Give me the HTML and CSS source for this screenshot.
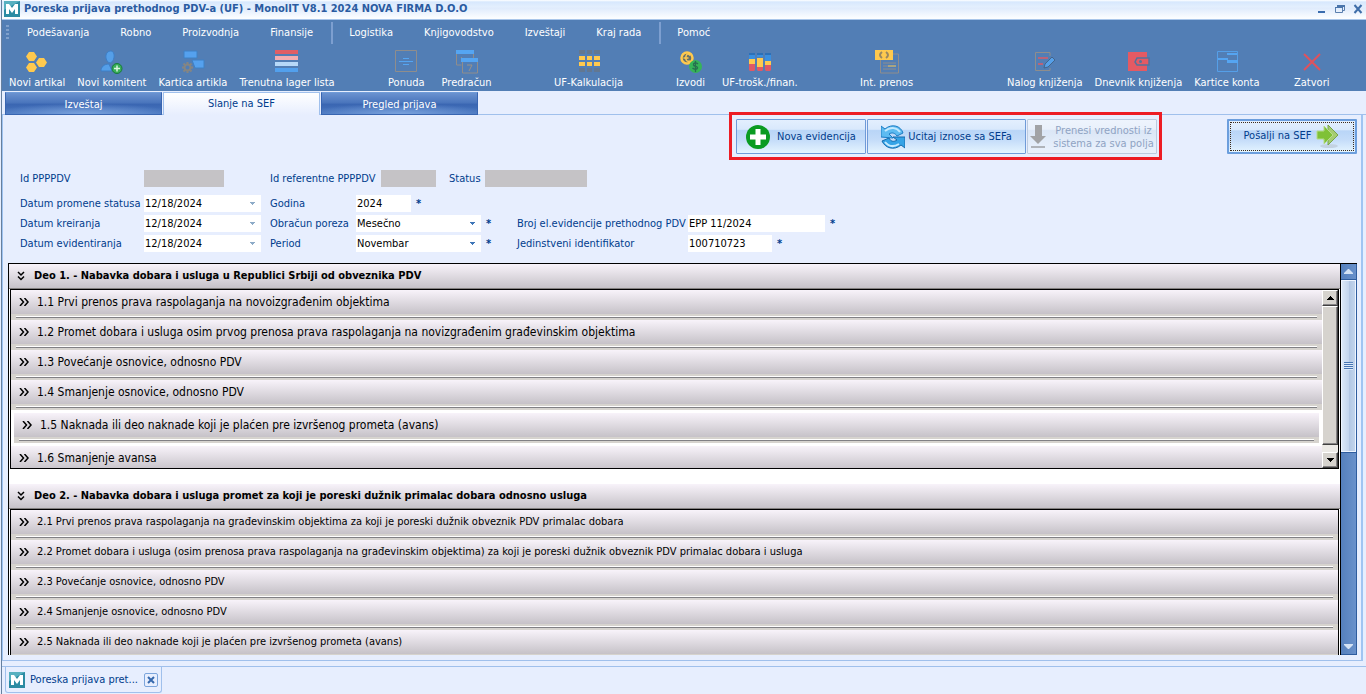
FILE: index.html
```html
<!DOCTYPE html>
<html lang="sr-Latn">

<head>
  <meta charset="UTF-8">
  <meta name="viewport" content="width=device-width, initial-scale=1.0">
  <title>Poreska prijava prethodnog PDV-a (UF) - MonolIT</title>
  <link rel="stylesheet" href="styles.css">
</head>

<body>
  <!-- shared shapes -->
  <svg class="defs" aria-hidden="true">
    <symbol id="logo" viewBox="0 0 16 16">
      <rect width="16" height="16" fill="#2b8ba3"/>
      <path d="M0 0h16L0 9z" fill="#58b0c0"/>
      <path d="M2 13V3h3l3 4 3-4h3v10h-3V8l-3 4-3-4v5z" fill="#fff"/>
    </symbol>
    <symbol id="down" viewBox="0 0 5 3"><path d="M0 0h5v1H4v1H3v1H2V2H1V1H0z" fill="currentColor"/></symbol>
    <symbol id="more" viewBox="0 0 10 8"><path d="M1 0l3.500 4L1 8M5.500 0L9 4 5.500 8" fill="none" stroke="#000" stroke-width="1.500"/></symbol>
    <symbol id="open" viewBox="0 0 8 10"><path d="M1 1l3 3 3-3M1 5.500l3 3 3-3" fill="none" stroke="#000" stroke-width="1.500"/></symbol>
  </svg>

  <div class="window">
    <header class="titlebar">
      <svg class="logo"><use href="#logo"/></svg>
      <h1>Poreska prijava prethodnog PDV-a (UF) - MonolIT V8.1 2024 NOVA FIRMA D.O.O</h1>
      <div class="win-btns">
        <button type="button" aria-label="Minimize"><svg viewBox="0 0 10 10"><path d="M1 7h7v2H1z" fill="#3a6cae"/></svg></button>
        <button type="button" aria-label="Restore"><svg viewBox="0 0 10 10"><path d="M2.500 1.500h7v5h-2M.5 3.500h7v5h-7z" fill="none" stroke="#5a7fae"/><path d="M2 1h8v2H2zM0 3h8v1H0z" fill="#4a75ab"/></svg></button>
        <button type="button" aria-label="Close"><svg viewBox="0 0 10 10"><path d="M1.500 1l7 8M8.500 1l-7 8" fill="none" stroke="#3f6ea9" stroke-width="2"/></svg></button>
      </div>
    </header>

    <nav class="menu">
      <span class="grip"></span>
      <div class="menu-group">
        <button type="button">Podešavanja</button>
        <button type="button">Robno</button>
        <button type="button">Proizvodnja</button>
        <button type="button">Finansije</button>
      </div>
      <div class="menu-group">
        <button type="button">Logistika</button>
        <button type="button">Knjigovodstvo</button>
        <button type="button">Izveštaji</button>
        <button type="button">Kraj rada</button>
      </div>
      <div class="menu-group">
        <button type="button">Pomoć</button>
      </div>
    </nav>

    <div class="toolbar">
      <div class="tools dense">
        <button type="button"><svg viewBox="0 0 24 24"><g fill="#ffc94e"><path d="M4 2h5l3 4.500L9 11H4L1 6.500zM4 13h5l3 4.500L9 22H4l-3-4.500zM14 8h5l3 4.500-3 4.500h-5l-3-4.500z"/></g></svg>Novi artikal</button>
        <button type="button"><svg viewBox="0 0 24 24"><path d="M10 1c6-1 5 11 0 12-5-1-6-11 0-12zM1 21c0-4 3-7 8-7l3 7z" fill="#559fe8" stroke="#3d7fc8"/><circle cx="17" cy="18.500" r="5" fill="#39ae58" stroke="#177b3a"/><path d="M17 15.500v6M14 18.500h6" stroke="#d9f5df" stroke-width="1.500"/></svg>Novi komitent</button>
        <button type="button"><svg viewBox="0 0 24 24"><path d="M3 1h13v7H3zM11 10h12v8H14z" fill="#55a1ee" stroke="#3e80c4"/><path d="M6.500 12v11M1 17.500h11M2.500 13.500l8 8M10.500 13.500l-8 8" stroke="#858583" stroke-width="2"/><circle cx="6.500" cy="17.500" r="3" fill="#527eb5" stroke="#858583" stroke-width="2"/></svg>Kartica artikla</button>
        <button type="button"><svg viewBox="0 0 24 24"><path d="M0 0h23v4H0z" fill="#df5f66"/><path d="M0 6h23v4H0z" fill="#f4adb0"/><path d="M0 12h23v4H0z" fill="#b6d8f8"/><path d="M0 18h23v4H0z" fill="#52a0ed"/></svg>Trenutna lager lista</button>
      </div>
      <div class="tools">
        <button type="button"><svg viewBox="0 0 24 24"><path d="M1.500.5h21v21h-21z" fill="none" stroke="#8f8d8c"/><path d="M5 11.500h14M9 8.500h6M9 14.500h6" stroke="#55a5f2"/></svg>Ponuda</button>
        <button type="button"><svg viewBox="0 0 24 24"><path d="M1.500 4v11h5M7.500 12v11h15V12" fill="none" stroke="#8f8d8c"/><path d="M1 0h18v4H1zM6 8h17v4H6z" fill="#55a5f2"/><path d="M6.500 7V8M18.500 4v4" stroke="#8f8d8c"/><path d="M12 15h5l-3 6" fill="none" stroke="#99938b"/></svg>Predračun</button>
      </div>
      <div class="tools">
        <button type="button"><svg viewBox="0 0 24 24"><path d="M2 0h6v4H2zM10 0h5v4h-5zM17 0h6v4h-6zM2 18h6v4H2zM10 18h5v4h-5zM17 18h6v4h-6z" fill="#617792"/><path d="M2 6h6v4H2zM10 6h5v4h-5zM17 6h6v4h-6zM2 12h6v4H2zM10 12h5v4h-5zM17 12h6v4h-6z" fill="#ffc94e"/></svg>UF-Kalkulacija</button>
      </div>
      <div class="tools">
        <button type="button"><svg viewBox="0 0 24 24"><circle cx="8" cy="8" r="5.500" fill="#66706a" stroke="#ffc94e" stroke-width="2.500"/><path d="M11 5.500C7-.5 4 13.500 11 11M4.500 8h5" fill="none" stroke="#ffc94e" stroke-width="1.500"/><circle cx="16.500" cy="16.500" r="6.500" fill="#36b458"/><path d="M19 14c-2-2-5-1-4.500 1 .5 2 4.500 1 4 3-.5 2-3.500 1.500-5 0M16.500 11v11" fill="none" stroke="#276f50" stroke-width="1.300"/></svg>Izvodi</button>
        <button type="button"><svg viewBox="0 0 24 24"><path d="M1 3h6v8H1zM9 3h6v4H9zM17 3h6v9h-6z" fill="#3a8fe0"/><path d="M1 9h6v6H1zM9 8h6v10H9zM17 11h6v5h-6z" fill="#ffc94e"/><path d="M1 14h6v6l-1 1H2l-1-1zM9 17h6v3l-1 1h-4l-1-1zM17 15h6v5l-1 1h-4l-1-1z" fill="#df5966"/><path d="M1 4h6M9 4h6M17 4h6" stroke="#2d70b7" stroke-width="2"/></svg>UF-trošk./finan.</button>
      </div>
      <div class="tools">
        <button type="button"><svg viewBox="0 0 24 24"><path d="M5.500 10v13h18V4H18M8 13h13M8 19h13M8 16h5" fill="none" stroke="#8f8d8c"/><path d="M0 0h18v10H0z" fill="#ffc94e"/><path d="M7 2Q3 5 7 8M11 2q4 3 0 6" fill="none" stroke="#9a8761" stroke-width="2"/><path d="M13 16h8" stroke="#ffc94e"/></svg>Int. prenos</button>
      </div>
      <div class="tools dense">
        <button type="button"><svg viewBox="0 0 24 24"><path d="M17 6V2.500H2.500v18H17V18" fill="none" stroke="#8f8d8c"/><path d="M5 8h10M5 14h5" stroke="#dc5b66" stroke-width="1.500"/><path d="M11 18l1-4 7-7 3 3-7 7z" fill="#559fe8" stroke="#43658c"/></svg>Nalog knjiženja</button>
        <button type="button"><svg viewBox="0 0 24 24"><path d="M2 2h19v19H2z" fill="#e45a63"/><path d="M11 8h12v7H11l-2-3z" fill="#e45a63" stroke="#54739c" stroke-width="1.500"/><circle cx="14.500" cy="11.500" r="1.500" fill="#54739c"/></svg>Dnevnik knjiženja</button>
        <button type="button"><svg viewBox="0 0 24 24"><path d="M2.500 1.500h20v20h-20z" fill="none" stroke="#559fe8"/><path d="M3 8h10v2h10v3H12v-3H3zM12 3h10v2H12z" fill="#55a5f2"/></svg>Kartice konta</button>
      </div>
      <div class="tools">
        <button type="button"><svg viewBox="0 0 24 24"><path d="M4 4l16 16M20 4L4 20" stroke="#df525d" stroke-width="2"/></svg>Zatvori</button>
      </div>
    </div>

    <div class="tabs">
      <button type="button">Izveštaj</button>
      <button type="button" class="active">Slanje na SEF</button>
      <button type="button">Pregled prijava</button>
    </div>

    <main class="panel">
      <div class="actions">
        <div class="marked">
          <button type="button" class="act"><svg viewBox="0 0 24 24"><circle cx="12" cy="12" r="12" fill="#0a9b22"/><path d="M12 4v16M4 12h16" stroke="#fff" stroke-width="5"/></svg>Nova evidencija</button>
          <button type="button" class="act act-load"><svg viewBox="0 0 24 24"><path d="M0 12V1l4 3c7-6 16-3 18 4l-6 3c-2-3-5-4-8-2l4 4z" fill="#5dbbf1" stroke="#1b7cc4"/><path d="M24 12v11l-4-3C13 26 4 23 1 16l7-3c2 4 5 4 8 2l-4-3z" fill="#35a3e6" stroke="#156bac"/><path d="M4 6c6-5 12-3 15 1M4 17c4 5 9 5 14 2" fill="none" stroke="#c4eaff" stroke-width="2"/></svg>Ucitaj iznose sa SEFa</button>
          <button type="button" class="act act-off" disabled><svg viewBox="0 0 16 24"><path d="M5 0h7v11h4l-8 8-8-8h5z" fill="#a2a3a6"/><path d="M1 21h14v2H1z" fill="#b0b4ba"/></svg><span>Prenesi vrednosti iz<br>sistema za sva polja</span></button>
        </div>
        <button type="button" class="act act-send"><span>Pošalji na SEF</span><svg viewBox="0 0 24 24"><ellipse cx="13" cy="22" rx="9" ry="2" fill="#c3d2e2"/><path d="M8 6h4V1l10 10-10 10v-5H8z" fill="#a5cc72" stroke="#79a64a"/><path d="M1 7h7V2l9 9-9 9v-5H1z" fill="#7fc137" stroke="#b7dc8b"/></svg></button>
      </div>

      <form class="fields">
        <div class="col">
          <div class="field top"><label for="idp">Id PPPPDV</label><input id="idp" class="gray" disabled></div>
          <div class="field"><label for="d1">Datum promene statusa</label><span class="combo pale"><select id="d1"><option>12/18/2024</option></select><svg><use href="#down"/></svg></span></div>
          <div class="field"><label for="d2">Datum kreiranja</label><span class="combo pale"><select id="d2"><option>12/18/2024</option></select><svg><use href="#down"/></svg></span></div>
          <div class="field"><label for="d3">Datum evidentiranja</label><span class="combo pale"><select id="d3"><option>12/18/2024</option></select><svg><use href="#down"/></svg></span></div>
        </div>
        <div class="col rest">
          <div class="field top">
            <label for="idr" class="ref">Id referentne PPPPDV</label><input id="idr" class="gray short" disabled>
            <label for="st" class="status">Status</label><input id="st" class="gray long" disabled>
          </div>
          <div class="pair">
            <div class="field"><label for="god">Godina</label><input id="god" class="year" value="2024"><b>*</b></div>
          </div>
          <div class="pair">
            <div class="field"><label for="obr">Obračun poreza</label><span class="combo"><select id="obr"><option>Mesečno</option></select><svg><use href="#down"/></svg></span><b>*</b></div>
            <div class="field wide"><label for="broj">Broj el.evidencije prethodnog PDV</label><input id="broj" class="number" value="EPP 11/2024"><b>*</b></div>
          </div>
          <div class="pair">
            <div class="field"><label for="per">Period</label><span class="combo"><select id="per"><option>Novembar</option></select><svg><use href="#down"/></svg></span><b>*</b></div>
            <div class="field wide"><label for="jed">Jedinstveni identifikator</label><input id="jed" class="ident" value="100710723"><b>*</b></div>
          </div>
        </div>
      </form>

      <div class="accordion">
        <div class="sections">
          <section>
            <h2><button type="button" class="head"><svg><use href="#open"/></svg>Deo 1. - Nabavka dobara i usluga u Republici Srbiji od obveznika PDV</button></h2>
            <div class="box">
              <ul class="list big">
                <li><button type="button"><svg><use href="#more"/></svg>1.1 Prvi prenos prava raspolaganja na novoizgrađenim objektima</button></li>
                <li><button type="button"><svg><use href="#more"/></svg>1.2 Promet dobara i usluga osim prvog prenosa prava raspolaganja na novizgrađenim građevinskim objektima</button></li>
                <li><button type="button"><svg><use href="#more"/></svg>1.3 Povećanje osnovice, odnosno PDV</button></li>
                <li><button type="button"><svg><use href="#more"/></svg>1.4 Smanjenje osnovice, odnosno PDV</button></li>
                <li class="hot"><button type="button"><svg><use href="#more"/></svg>1.5 Naknada ili deo naknade koji je plaćen pre izvršenog prometa (avans)</button></li>
                <li><button type="button"><svg><use href="#more"/></svg>1.6 Smanjenje avansa</button></li>
              </ul>
              <div class="scroll-old">
                <button type="button" aria-label="Gore"><svg viewBox="0 0 7 4"><path d="M3 0h1v1h1v1h1v1h1v1H0V3h1V2h1V1h1z"/></svg></button>
                <span class="thumb"></span>
                <button type="button" aria-label="Dole"><svg viewBox="0 0 7 4"><path d="M0 0h7v1H6v1H5v1H4v1H3V3H2V2H1V1H0z"/></svg></button>
              </div>
            </div>
          </section>
          <section>
            <h2><button type="button" class="head"><svg><use href="#open"/></svg>Deo 2. - Nabavka dobara i usluga promet za koji je poreski dužnik primalac dobara odnosno usluga</button></h2>
            <div class="box">
              <ul class="list">
                <li><button type="button"><svg><use href="#more"/></svg>2.1 Prvi prenos prava raspolaganja na građevinskim objektima za koji je poreski dužnik obveznik PDV primalac dobara</button></li>
                <li><button type="button"><svg><use href="#more"/></svg>2.2 Promet dobara i usluga (osim prenosa prava raspolaganja na građevinskim objektima) za koji je poreski dužnik obveznik PDV primalac dobara i usluga</button></li>
                <li><button type="button"><svg><use href="#more"/></svg>2.3 Povećanje osnovice, odnosno PDV</button></li>
                <li><button type="button"><svg><use href="#more"/></svg>2.4 Smanjenje osnovice, odnosno PDV</button></li>
                <li><button type="button"><svg><use href="#more"/></svg>2.5 Naknada ili deo naknade koji je plaćen pre izvršenog prometa (avans)</button></li>
              </ul>
            </div>
          </section>
        </div>
        <div class="scroll-blue">
          <button type="button" aria-label="Gore"><svg viewBox="0 0 9 5"><path d="M4 0h1l4 4v1H0V4z" fill="#d3e2f5"/></svg></button>
          <span class="thumb"><i></i></span>
          <button type="button" aria-label="Dole"><svg viewBox="0 0 9 5"><path d="M4 5h1l4-4V0H0v1z" fill="#d3e2f5"/></svg></button>
        </div>
      </div>
    </main>

    <footer class="docs">
      <div class="doc">
        <svg class="logo"><use href="#logo"/></svg>
        <span>Poreska prijava pret...</span>
        <button type="button" aria-label="Zatvori"><svg viewBox="0 0 8 8"><path d="M1 1l6 6M7 1L1 7" stroke="#3568ad" stroke-width="2"/></svg></button>
      </div>
    </footer>
  </div>
</body>

</html>
```
FILE: styles.css
```css
*{
  box-sizing: border-box;
}
body{
  margin: 0;
  background: #e7eefe;
  color: #003c8c;
  font: 11px/14px Tahoma, "DejaVu Sans Condensed", "DejaVu Sans", sans-serif;
}
button,input,select{
  margin: 0;
  padding: 0;
  border: 0;
  border-radius: 0;
  background: none;
  color: inherit;
  font: inherit;
}
h1,h2,ul{
  margin: 0;
  padding: 0;
  font: inherit;
  list-style: none;
}
svg{
  display: block;
  flex-shrink: 0;
}
.defs{
  position: absolute;
  width: 0;
  height: 0;
}
.window{
  height: 100vh;
  display: flex;
  flex-direction: column;
  margin-left: 1px;
  border-left: 1px solid #66809f;
  overflow: hidden;
}
.logo{
  width: 16px;
  height: 16px;
}

/* title */
.titlebar{
  height: 20px;
  flex-shrink: 0;
  display: flex;
  align-items: center;
  padding: 0 3px 2px 2px;
  border-bottom: 1px solid #a9c6ea;
  background: linear-gradient(#fff 0, #d7e8fd 2px, #e4effd 7px, #dfebfc 8px, #fbfdff 18px);
}
.titlebar h1{
  flex: 1;
  padding-left: 4px;
  font-weight: bold;
  color: #2a5ba1;
  white-space: nowrap;
}
.win-btns{
  display: flex;
  gap: 8px;
}
.win-btns svg{
  width: 10px;
  height: 10px;
}

/* menu and toolbar */
.menu{
  height: 26px;
  flex-shrink: 0;
  display: flex;
  align-items: center;
  padding-left: 4px;
  background: #527eb5;
  color: #fff;
}
.grip{
  width: 3px;
  height: 16px;
  background: repeating-linear-gradient(#7fa0cb 0 2px, #527eb5 2px 4px);
}
.menu-group{
  display: flex;
  gap: 31px;
  padding: 4px 18px;
}
.menu-group + .menu-group{
  padding-left: 16px;
  border-left: 2px solid #7d9fd0;
}
.toolbar{
  height: 45px;
  flex-shrink: 0;
  display: grid;
  grid-template-columns: 377fr 166fr 122fr 184fr 147fr 287fr 81fr;
  padding-top: 4px;
  background: #527eb5;
  color: #fff;
}
.tools{
  display: flex;
  gap: 17px;
  padding-left: 9px;
  align-items: flex-start;
  min-width: 0;
}
.tools:first-child{
  padding-left: 7px;
}
.dense{
  gap: 12px;
}
.tools button{
  display: flex;
  flex-direction: column;
  align-items: center;
  gap: 2px;
  white-space: nowrap;
}
.tools svg{
  width: 24px;
  height: 24px;
}

/* page tabs */
.tabs{
  height: 24px;
  flex-shrink: 0;
  display: flex;
  gap: 1px;
  padding: 1px 0 0 3px;
  border-bottom: 1px solid #a0c0ec;
}
.tabs button{
  width: 157px;
  height: 23px;
  padding-top: 2px;
  border: 1px solid #3865b1;
  border-top-color: #6f9bd8;
  background: radial-gradient(60% 50% at 50% 100%, #7ba3dd, transparent), linear-gradient(#6a92d0, #4b76bd 45%, #3a66b2 55%, #4a77c0);
  color: #fff;
}
.tabs .active{
  padding-top: 0;
  border: 1px solid #a0c0ec;
  border-bottom: 0;
  background: linear-gradient(#fff, #e7eefe);
  color: #003c8c;
}

/* panel */
.panel{
  flex: 1;
  min-height: 0;
  display: flex;
  flex-direction: column;
  margin-right: 3px;
  padding: 0 4px 5px 5px;
  border-right: 2px solid #a0c4f2;
  border-bottom: 1px solid #a0c0ec;
  border-left: 1px solid #a0c4f2;
}
.actions{
  display: flex;
  justify-content: space-between;
  align-items: center;
  margin-top: -3px;
  padding-left: 721px;
}
.marked{
  display: flex;
  gap: 1px;
  padding: 4px 2px 3px 4px;
  border: 3px solid #ed1c24;
}
.act{
  height: 35px;
  min-width: 130px;
  display: flex;
  align-items: center;
  justify-content: center;
  gap: 7px;
  border: 1px solid #6f9bd8;
  border-radius: 1px;
  background: linear-gradient(#e3effe, #d9e9fc 28%, #b9d5f7 32%, #c4dcf9 60%, #e4f4ff);
  color: #003c8c;
  white-space: nowrap;
}
.act svg{
  width: 24px;
  height: 24px;
}
.act-load{
  min-width: 159px;
  gap: 3px;
}
.act-off{
  border-color: #bccbe0;
  background: linear-gradient(#eef4fd, #e9f0fb 28%, #dbe6f6 32%, #eaf2fd);
  color: #8fa3c3;
  line-height: 13px;
}
.act-off svg{
  width: 16px;
}
.act-send{
  gap: 5px;
  border: 2px solid #6c9edd;
  outline: 1px dotted #3c2a18;
  outline-offset: -4px;
}

/* form */
.fields{
  display: flex;
  margin-top: 10px;
  padding: 0 12px;
}
.col{
  display: flex;
  flex-direction: column;
  gap: 3px;
}
.field{
  display: flex;
  align-items: center;
}
.top{
  padding-bottom: 5px;
}
.field label{
  width: 124px;
  white-space: nowrap;
}
.field input{
  width: 80px;
  height: 17px;
  padding: 0 1px;
  background: #fff;
  color: #000;
}
.field .gray{
  background: #c5c3c6;
}
.combo{
  position: relative;
  width: 117px;
  height: 17px;
  background: #fff;
  color: #3f76b8;
}
.combo select{
  width: 100%;
  height: 17px;
  padding-left: 1px;
  appearance: none;
  color: #000;
}
.combo svg{
  position: absolute;
  top: 7px;
  right: 6px;
  width: 5px;
  height: 3px;
  pointer-events: none;
}
.pale{
  color: #8dabc8;
}
.field b{
  width: 12px;
  padding-left: 5px;
}
.rest{
  padding-left: 9px;
}
.pair{
  display: flex;
}
.pair .field label{
  width: 86px;
}
.pair .combo{
  width: 125px;
}
.pair .wide label{
  width: 171px;
}
.wide{
  padding-left: 24px;
}
.field .ref{
  width: 111px;
}
.field .short{
  width: 55px;
}
.field .status{
  width: 49px;
  padding-left: 13px;
}
.field .long{
  width: 102px;
}
.field .year{
  width: 55px;
}
.field .number{
  width: 137px;
}
.field .ident{
  width: 84px;
}

/* accordion */
.accordion{
  flex: 1;
  min-height: 0;
  display: flex;
  margin-top: 11px;
  border-top: 1px solid #000;
  overflow: hidden;
}
.sections{
  flex: 1;
  min-width: 0;
  border: solid #000;
  border-width: 0 1px;
  background: #fff;
}
section{
  padding-bottom: 15px;
}
.head{
  width: 100%;
  height: 25px;
  display: flex;
  align-items: center;
  gap: 9px;
  padding-left: 8px;
  border-bottom: 1px solid #83807f;
  background: linear-gradient(#f8f3fa, #c6c2c8);
  color: #000;
  font-weight: bold;
}
.head svg{
  width: 8px;
  height: 10px;
}
.box{
  display: flex;
  margin: 0 1px;
  border: 1px solid #000;
}
.list{
  flex: 1;
  min-width: 0;
  background: #fff;
}
.big{
  height: 178px;
  overflow: hidden;
  font-size: 12px;
}
.list li{
  height: 30px;
  padding-bottom: 6px;
  background: linear-gradient(#fff 0 1px, #808084 1px 2px) 5px 26px / calc(100% - 10px) 2px no-repeat #d6d3ce;
}
.list button{
  width: 100%;
  height: 24px;
  display: flex;
  align-items: center;
  gap: 8px;
  padding-left: 8px;
  background: linear-gradient(#f8f3fa, #c6c2c8);
  color: #000;
  text-align: left;
  white-space: nowrap;
}
.list svg{
  width: 10px;
  height: 8px;
}
.list .hot{
  margin: 3px;
}

/* scrollbars */
.scroll-old{
  width: 16px;
  display: flex;
  flex-direction: column;
  background: #eceae6;
}
.scroll-old button,
.scroll-old .thumb{
  border: 1px solid;
  border-color: #fff #404040 #404040 #fff;
  box-shadow: inset -1px -1px #848284;
  background: #d6d3ce;
}
.scroll-old button{
  height: 16px;
  display: flex;
  align-items: center;
  justify-content: center;
}
.scroll-old svg{
  width: 7px;
  height: 4px;
}
.scroll-old .thumb{
  flex: 1;
  margin-bottom: 7px;
}
.scroll-blue{
  width: 16px;
  display: flex;
  flex-direction: column;
  border-right: 1px solid #2e5c9e;
  border-bottom: 1px solid #2e5c9e;
  background: linear-gradient(90deg, #5580bd, #6991cb);
}
.scroll-blue button{
  height: 15px;
  display: flex;
  align-items: center;
  justify-content: center;
}
.scroll-blue svg{
  width: 9px;
  height: 5px;
}
.scroll-blue .thumb{
  height: 44%;
  flex-shrink: 0;
  display: flex;
  align-items: center;
  justify-content: center;
  margin: 1px 0 auto;
  border: 1px solid #eef5ff;
  box-shadow: 0 -1px #2e5c9e, 0 1px #2e5c9e;
  background: linear-gradient(90deg, #dbe8f8, #c4d6ee 50%, #b0c6e4 52%, #c2d4ec);
}
.thumb i{
  width: 9px;
  height: 8px;
  background: repeating-linear-gradient(#4675b4 0 1px, #dbe8f8 1px 2px);
}

/* open documents */
.docs{
  flex-shrink: 0;
  margin-top: 5px;
  padding: 0 0 1px 3px;
  border-top: 1px solid #a0c0ec;
}
.doc{
  width: 157px;
  height: 26px;
  display: flex;
  align-items: center;
  gap: 5px;
  padding: 0 3px;
  border: 1px solid #a0c0ec;
  border-top: 0;
  border-radius: 0 0 3px 3px;
}
.doc span{
  flex: 1;
  white-space: nowrap;
}
.doc button{
  padding: 2px;
  border: 1px solid #7ca5dc;
  border-radius: 2px;
}
.doc button svg{
  width: 8px;
  height: 8px;
}
```
